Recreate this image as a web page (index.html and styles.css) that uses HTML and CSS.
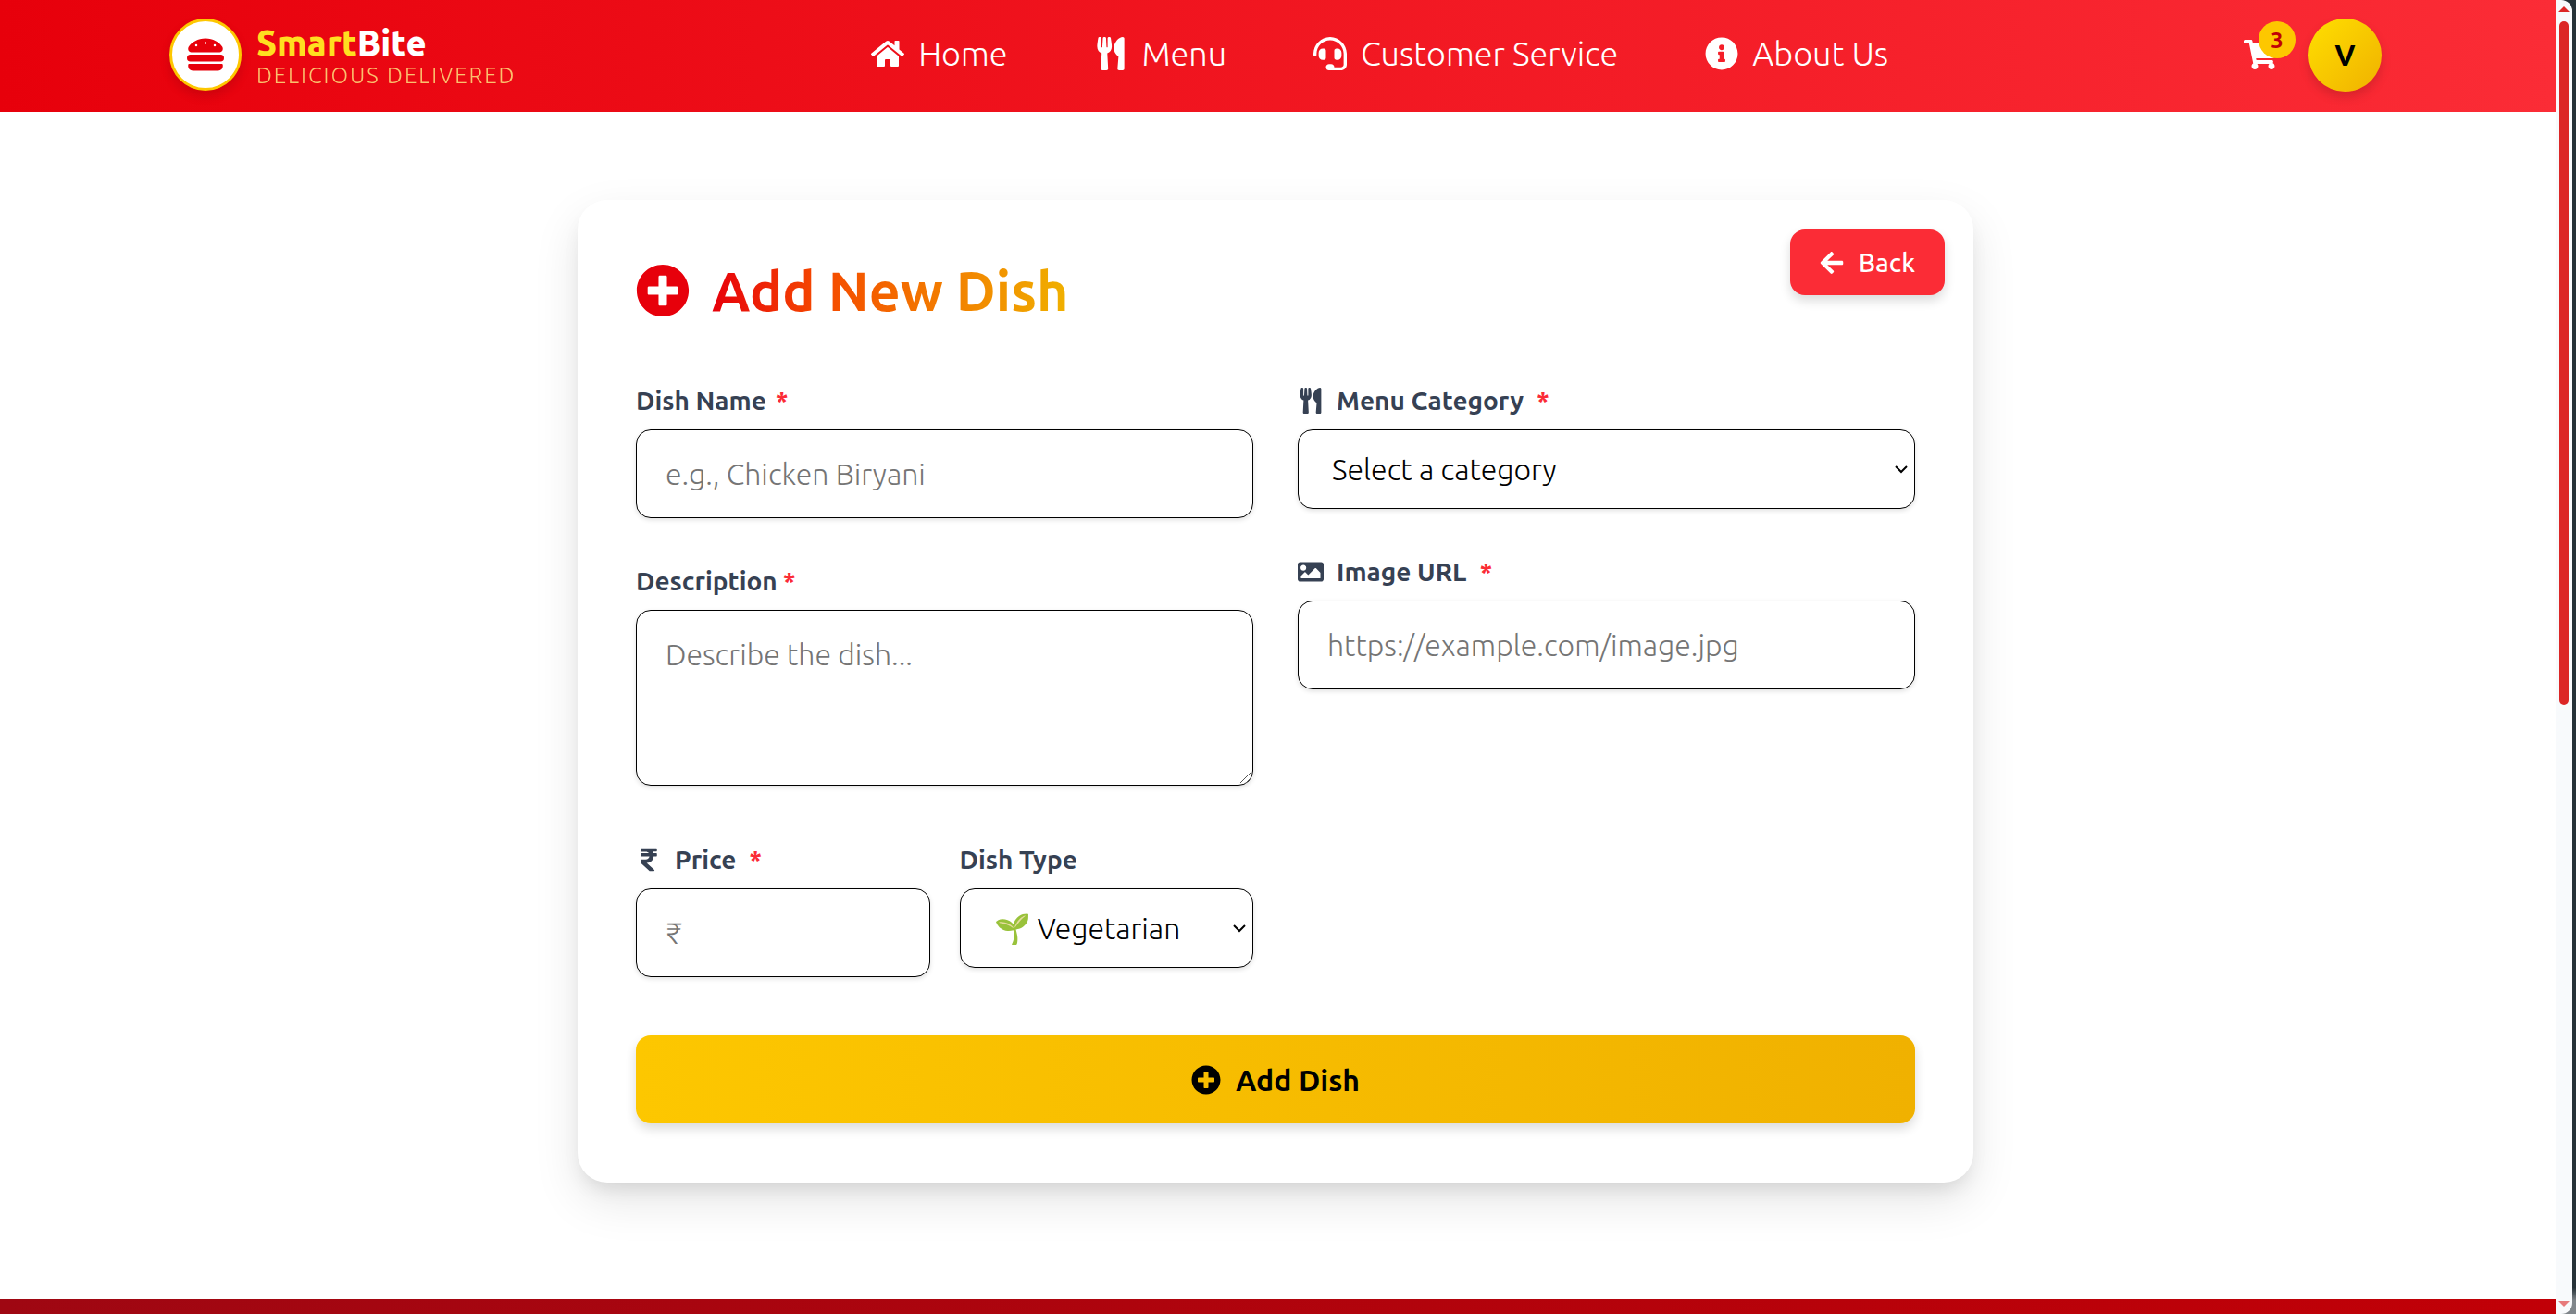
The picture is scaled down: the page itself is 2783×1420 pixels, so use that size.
FILE: index.html
```html
<!DOCTYPE html>
<html lang="en">
<head>
<meta charset="utf-8">
<meta name="viewport" content="width=device-width, initial-scale=1">
<title>SmartBite – Add New Dish</title>
<link rel="stylesheet" href="styles.css">
</head>
<body>
<svg class="sprite" aria-hidden="true">
  <symbol id="i-burger" viewBox="0 0 512 512"><path d="M464 256H48a48 48 0 0 0 0 96h416a48 48 0 0 0 0-96zm16 128H32a16 16 0 0 0-16 16v16a64 64 0 0 0 64 64h352a64 64 0 0 0 64-64v-16a16 16 0 0 0-16-16zM58.640 224h394.720c34.570 0 54.620-43.900 34.820-75.880C448 83.200 359.550 32.100 256 32c-103.540.100-192 51.200-232.180 116.110C4 180.090 24.070 224 58.640 224zM384 112a16 16 0 1 1-16 16 16 16 0 0 1 16-16zM256 80a16 16 0 1 1-16 16 16 16 0 0 1 16-16zm-128 32a16 16 0 1 1-16 16 16 16 0 0 1 16-16z"/></symbol>
  <symbol id="i-home" viewBox="0 0 576 512"><path d="M280.370 148.260L96 300.110V464a16 16 0 0 0 16 16l112.060-.290a16 16 0 0 0 15.920-16V368a16 16 0 0 1 16-16h64a16 16 0 0 1 16 16v95.640a16 16 0 0 0 16 16.050L464 480a16 16 0 0 0 16-16V300L295.670 148.260a12.190 12.190 0 0 0-15.300 0zM571.600 251.470L488 182.560V44.050a12 12 0 0 0-12-12h-56a12 12 0 0 0-12 12v72.610L318.470 43a48 48 0 0 0-61 0L4.340 251.470a12 12 0 0 0-1.600 16.900l25.500 31A12 12 0 0 0 45.150 301l235.220-193.740a12.190 12.190 0 0 1 15.300 0L530.900 301a12 12 0 0 0 16.900-1.600l25.500-31a12 12 0 0 0-1.700-16.930z"/></symbol>
  <symbol id="i-utensils" viewBox="0 0 416 512"><path d="M207.900 15.200c.800 4.700 16.100 94.500 16.100 128.800 0 52.300-27.800 89.600-68.900 104.600L168 486.700c.700 13.700-10.200 25.300-24 25.300H80c-13.700 0-24.700-11.500-24-25.300l12.900-238.100C27.700 233.600 0 196.200 0 144 0 109.600 15.300 19.900 16.100 15.200 19.300-5.100 61.400-5.400 64 16.300v141.200c1.300 3.400 15.100 3.200 16 0 1.400-25.300 7.900-139.200 8-141.800 3.300-20.800 44.700-20.800 47.900 0 .200 2.700 6.600 116.500 8 141.800.900 3.200 14.800 3.400 16 0V16.300c2.600-21.600 44.800-21.400 48-1.100zm119.200 285.700l-15 185.100c-1.200 14 9.900 26 23.900 26h56c13.300 0 24-10.700 24-24V24c0-13.200-10.700-24-24-24-82.500 0-221.400 178.500-64.900 300.900z"/></symbol>
  <symbol id="i-headset" viewBox="0 0 512 512"><path d="M192 208c0-17.670-14.330-32-32-32h-16c-35.350 0-64 28.650-64 64v48c0 35.350 28.650 64 64 64h16c17.670 0 32-14.330 32-32V208zm176 144c35.350 0 64-28.650 64-64v-48c0-35.350-28.650-64-64-64h-16c-17.670 0-32 14.330-32 32v112c0 17.670 14.330 32 32 32h16zM256 0C113.180 0 4.580 118.830 0 256v16c0 8.840 7.160 16 16 16h16c8.840 0 16-7.160 16-16v-16c0-114.690 93.310-208 208-208s208 93.310 208 208h-.120c.080 2.430.120 165.720.120 165.720 0 23.350-18.930 42.280-42.280 42.280H320c0-26.510-21.490-48-48-48h-32c-26.510 0-48 21.490-48 48s21.490 48 48 48h181.720c49.860 0 90.280-40.420 90.280-90.280V256C507.420 118.830 398.820 0 256 0z"/></symbol>
  <symbol id="i-info" viewBox="0 0 512 512"><path d="M256 8C119.043 8 8 119.083 8 256c0 136.997 111.043 248 248 248s248-111.003 248-248C504 119.083 392.957 8 256 8zm0 110c23.196 0 42 18.804 42 42s-18.804 42-42 42-42-18.804-42-42 18.804-42 42-42zm56 254c0 6.627-5.373 12-12 12h-88c-6.627 0-12-5.373-12-12v-24c0-6.627 5.373-12 12-12h12v-64h-12c-6.627 0-12-5.373-12-12v-24c0-6.627 5.373-12 12-12h64c6.627 0 12 5.373 12 12v100h12c6.627 0 12 5.373 12 12v24z"/></symbol>
  <symbol id="i-cart" viewBox="0 0 576 512"><path d="M528.120 301.319l47.273-208C578.806 78.301 567.391 64 551.990 64H159.208l-9.166-44.810C147.758 8.021 137.930 0 126.529 0H24C10.745 0 0 10.745 0 24v16c0 13.255 10.745 24 24 24h69.883l70.248 343.435C147.325 417.100 136 435.222 136 456c0 30.928 25.072 56 56 56s56-25.072 56-56c0-15.674-6.447-29.835-16.824-40h209.647C430.447 426.165 424 440.326 424 456c0 30.928 25.072 56 56 56s56-25.072 56-56c0-22.172-12.888-41.332-31.579-50.405l5.517-24.276c3.413-15.018-8.002-29.319-23.403-29.319H218.117l-6.545-32h293.145c11.206 0 20.920-7.754 23.403-18.681z"/></symbol>
  <symbol id="i-plus" viewBox="0 0 512 512"><path d="M256 8C119 8 8 119 8 256s111 248 248 248 248-111 248-248S393 8 256 8zm144 276c0 6.600-5.400 12-12 12h-92v92c0 6.600-5.400 12-12 12h-56c-6.600 0-12-5.400-12-12v-92h-92c-6.600 0-12-5.400-12-12v-56c0-6.600 5.400-12 12-12h92v-92c0-6.600 5.400-12 12-12h56c6.600 0 12 5.400 12 12v92h92c6.600 0 12 5.400 12 12v56z"/></symbol>
  <symbol id="i-back" viewBox="0 0 448 512"><path d="M257.500 445.100l-22.200 22.200c-9.400 9.400-24.600 9.400-33.900 0L7 273c-9.400-9.400-9.400-24.600 0-33.900L201.400 44.700c9.400-9.400 24.600-9.400 33.900 0l22.200 22.200c9.500 9.500 9.300 25-.400 34.300L136.600 216H424c13.300 0 24 10.700 24 24v32c0 13.300-10.700 24-24 24H136.600l120.500 114.800c9.800 9.300 10 24.800.400 34.300z"/></symbol>
  <symbol id="i-image" viewBox="0 0 512 512"><path d="M464 448H48c-26.510 0-48-21.490-48-48V112c0-26.510 21.490-48 48-48h416c26.510 0 48 21.490 48 48v288c0 26.510-21.490 48-48 48zM112 120c-30.928 0-56 25.072-56 56s25.072 56 56 56 56-25.072 56-56-25.072-56-56-56zM64 384h384V272l-87.515-87.515c-4.686-4.686-12.284-4.686-16.971 0L208 320l-55.515-55.515c-4.686-4.686-12.284-4.686-16.971 0L64 336v48z"/></symbol>
  <symbol id="i-rupee" viewBox="0 0 320 512"><path d="M308 96c6.627 0 12-5.373 12-12V44c0-6.627-5.373-12-12-12H12C5.373 32 0 37.373 0 44v44.748c0 6.627 5.373 12 12 12h85.280c27.308 0 48.261 9.958 60.970 27.252H12c-6.627 0-12 5.373-12 12v40c0 6.627 5.373 12 12 12h158.757c-6.217 36.086-32.961 58.632-74.757 58.632H12c-6.627 0-12 5.373-12 12v53.012c0 3.349 1.400 6.546 3.861 8.818l165.052 152.356a12.001 12.001 0 0 0 8.139 3.182h82.562c10.924 0 16.166-13.408 8.139-20.818L116.871 319.906c76.499-2.340 131.144-53.395 138.318-127.906H308c6.627 0 12-5.373 12-12v-40c0-6.627-5.373-12-12-12h-58.690c-3.486-11.541-8.280-22.246-14.252-32H308z"/></symbol>
</svg>

<div class="window">
  <div class="page">
    <header class="header">
      <a class="brand" href="#">
        <span class="brand-mark"><svg class="icon"><use href="#i-burger"/></svg></span>
        <span class="brand-text">
          <span class="brand-name"><span class="brand-accent">Smart</span>Bite</span>
          <span class="brand-tag">DELICIOUS DELIVERED</span>
        </span>
      </a>
      <nav class="nav" aria-label="Main">
        <a href="#"><svg class="icon"><use href="#i-home"/></svg>Home</a>
        <a href="#"><svg class="icon"><use href="#i-utensils"/></svg>Menu</a>
        <a href="#"><svg class="icon"><use href="#i-headset"/></svg>Customer Service</a>
        <a href="#"><svg class="icon"><use href="#i-info"/></svg>About Us</a>
      </nav>
      <div class="account">
        <a class="cart" href="#" aria-label="Cart"><svg class="icon"><use href="#i-cart"/></svg><span class="cart-count">3</span></a>
        <button class="avatar" type="button">V</button>
      </div>
    </header>

    <main class="main">
      <section class="card">
        <button class="back" type="button"><svg class="icon"><use href="#i-back"/></svg>Back</button>
        <h1 class="title"><svg class="icon"><use href="#i-plus"/></svg><span class="title-text">Add New Dish</span></h1>
        <form class="form">
          <div class="column">
            <div class="field">
              <label class="label-plain" for="name">Dish Name<span class="required">*</span></label>
              <input id="name" class="control" type="text" placeholder="e.g., Chicken Biryani">
            </div>
            <div class="field field-area">
              <label class="label-tight" for="description">Description<span class="required">*</span></label>
              <textarea id="description" class="control" placeholder="Describe the dish..."></textarea>
            </div>
            <div class="pair">
              <div class="field">
                <label for="price"><svg class="icon"><use href="#i-rupee"/></svg>Price<span class="required">*</span></label>
                <input id="price" class="control" type="text" placeholder="₹">
              </div>
              <div class="field">
                <label for="type">Dish Type</label>
                <select id="type" class="control"><option>🌱 Vegetarian</option></select>
              </div>
            </div>
          </div>
          <div class="column">
            <div class="field">
              <label for="category"><svg class="icon"><use href="#i-utensils"/></svg>Menu Category<span class="required">*</span></label>
              <select id="category" class="control"><option>Select a category</option></select>
            </div>
            <div class="field">
              <label for="image"><svg class="icon"><use href="#i-image"/></svg>Image URL<span class="required">*</span></label>
              <input id="image" class="control" type="text" placeholder="https://example.com/image.jpg">
            </div>
          </div>
          <button class="submit" type="submit"><svg class="icon"><use href="#i-plus"/></svg>Add Dish</button>
        </form>
      </section>
    </main>
    <footer class="footer"></footer>
  </div>
  <div class="scrollbar" aria-hidden="true">
    <svg class="scroll-arrow" viewBox="0 0 12 6"><path d="M0 6L6 0l6 6z"/></svg>
    <div class="scroll-thumb"></div>
    <svg class="scroll-arrow scroll-end" viewBox="0 0 12 6"><path d="M0 0h12L6 6z"/></svg>
  </div>
</div>
</body>
</html>
```
FILE: styles.css
```css
* {
  box-sizing: border-box;
}

body {
  margin: 0;
  height: 100vh;
  overflow: hidden;
  background: linear-gradient(#263238 98%, #80868b 99%);
  color: #000;
  font-family: Ubuntu, "Open Sans", sans-serif;
  font-size: 32px;
  font-weight: 300;
}

button,
input,
select,
textarea {
  font: inherit;
  color: inherit;
}

a {
  color: inherit;
  text-decoration: none;
}

.sprite {
  display: none;
}

.icon {
  width: 36px;
  height: 36px;
  flex: none;
  fill: currentColor;
}

/* window frame */
.window {
  display: grid;
  grid-template-columns: 1fr 18px;
  height: 100vh;
  margin-right: 4px;
  overflow: hidden;
  border-radius: 0 12px 12px 0;
}

.page {
  display: flex;
  flex-direction: column;
  overflow: hidden;
  background: #fff;
}

.scrollbar {
  display: flex;
  flex-direction: column;
  align-items: center;
  padding: 7px 0 8px;
  background: #f8fafc;
}

.scroll-arrow {
  width: 12px;
  height: 6px;
  flex: none;
  fill: #dc2626;
}

.scroll-end {
  opacity: 0.6;
}

.scroll-thumb {
  width: 10px;
  height: 52.6%;
  margin: 10px 0 auto;
  border-radius: 5px;
  background: #dc2626;
}

/* header */
.header {
  display: flex;
  justify-content: space-between;
  align-items: center;
  flex: none;
  height: 121px;
  padding: 0 188px 3px 183px;
  background: linear-gradient(90deg, #e7000b, #fb2c36);
  color: #fff;
}

.brand {
  display: flex;
  align-items: center;
  gap: 16px;
}

.brand-mark {
  display: grid;
  place-items: center;
  width: 78px;
  height: 78px;
  border: 3px solid #fdc700;
  border-radius: 50%;
  background: #fff;
  color: #e7000b;
  box-shadow: 0 6px 12px rgba(0, 0, 0, 0.12);
}

.brand-mark .icon {
  width: 40px;
  height: 40px;
}

.brand-text {
  display: flex;
  flex-direction: column;
  padding-top: 6px;
}

.brand-name {
  font-size: 38px;
  font-weight: 800;
  line-height: 40px;
}

.brand-accent {
  color: #ffdf20;
}

.brand-tag {
  color: #fff085;
  opacity: 0.8;
  font-size: 24px;
  line-height: 32px;
  letter-spacing: 2px;
}

.nav {
  display: flex;
  gap: 94px;
  padding-bottom: 2px;
  font-size: 36px;
  line-height: 48px;
}

.nav a {
  display: flex;
  align-items: center;
  gap: 15px;
}

.account {
  display: flex;
  align-items: center;
  gap: 34px;
}

.cart {
  position: relative;
  display: flex;
}

.cart-count {
  position: absolute;
  top: -18px;
  right: -20px;
  display: grid;
  place-items: center;
  width: 40px;
  height: 40px;
  border-radius: 50%;
  background: #fdc700;
  color: #c10007;
  font-size: 24px;
  font-weight: 600;
}

.avatar {
  width: 79px;
  height: 79px;
  padding: 0;
  border: 0;
  border-radius: 50%;
  background: linear-gradient(135deg, #ffdf00, #f0b100);
  box-shadow: 0 6px 12px rgba(0, 0, 0, 0.14);
  color: #000;
  font-weight: 600;
}

/* card */
.main {
  flex: none;
  padding: 95px 64px 126px 59px;
}

.card {
  position: relative;
  max-width: 1508px;
  margin: 0 auto;
  padding: 64px 63px;
  border-radius: 32px;
  background: #fff;
  box-shadow: 0 20px 50px rgba(0, 0, 0, 0.1), 0 12px 22px -8px rgba(0, 0, 0, 0.12);
}

.back {
  position: absolute;
  top: 32px;
  right: 31px;
  display: flex;
  align-items: center;
  gap: 16px;
  height: 71px;
  padding: 0 32px;
  border: 0;
  border-radius: 16px;
  background: #fb2c36;
  color: #fff;
  box-shadow: 0 6px 12px rgba(0, 0, 0, 0.14);
  font-size: 28px;
  font-weight: 500;
}

.back .icon {
  width: 26px;
  height: 28px;
}

.title {
  display: flex;
  align-items: center;
  gap: 24px;
  margin: 0 0 67px;
  color: #e7000b;
  font-size: 59px;
  font-weight: 600;
  line-height: 68px;
}

.title .icon {
  width: 58px;
  height: 58px;
}

.title-text {
  background: linear-gradient(90deg, #e7000b, #f54900 30%, #f0b100);
  -webkit-background-clip: text;
  background-clip: text;
  color: transparent;
}

.form {
  display: grid;
  grid-template-columns: 1fr 1fr;
  column-gap: 48px;
  row-gap: 63px;
}

.column {
  display: flex;
  flex-direction: column;
  gap: 50px;
}

.field {
  display: flex;
  flex-direction: column;
  gap: 13px;
}

.field-area {
  margin-bottom: 12px;
}

.pair {
  display: grid;
  grid-template-columns: 1fr 1fr;
  gap: 32px;
}

label {
  display: flex;
  align-items: center;
  gap: 14px;
  color: #364153;
  font-size: 28px;
  font-weight: 600;
  line-height: 36px;
}

.label-plain {
  gap: 10px;
}

.label-tight {
  gap: 6px;
}

label .icon {
  width: 28px;
  height: 28px;
}

.required {
  color: #fb2c36;
}

.control {
  width: 100%;
  height: 96px;
  padding: 0 31px;
  border: 1px solid #000;
  border-radius: 16px;
  background: #fff;
  box-shadow: 0 2px 5px rgba(0, 0, 0, 0.12);
}

.control::placeholder {
  color: #757575;
  opacity: 1;
}

select.control {
  height: 86px;
  padding: 0 28px 0 36px;
  appearance: none;
  background: #fff url("data:image/svg+xml,%3Csvg xmlns='http://www.w3.org/2000/svg' width='16' height='10' fill='none' stroke='black' stroke-width='2'%3E%3Cpath d='M2 2l6 6 6-6'/%3E%3C/svg%3E") no-repeat right 6px center;
}

textarea.control {
  display: block;
  height: 190px;
  padding-top: 29px;
}

textarea.control::-webkit-resizer {
  background: url("data:image/svg+xml,%3Csvg xmlns='http://www.w3.org/2000/svg' width='14' height='14' fill='none' stroke='%23555' stroke-width='1'%3E%3Cpath d='M1 12L12 1M6 13l7-7'/%3E%3C/svg%3E") no-repeat right bottom;
}

.submit {
  grid-column: 1 / -1;
  display: flex;
  justify-content: center;
  align-items: center;
  gap: 16px;
  height: 95px;
  border: 0;
  border-radius: 16px;
  background: linear-gradient(90deg, #fdc700, #f0b100);
  box-shadow: 0 6px 12px rgba(0, 0, 0, 0.14);
  font-weight: 600;
}

.submit .icon {
  width: 32px;
  height: 32px;
}

.footer {
  flex: 1;
  min-height: 16px;
  background: linear-gradient(90deg, #9f0712, #c10007);
}
```
